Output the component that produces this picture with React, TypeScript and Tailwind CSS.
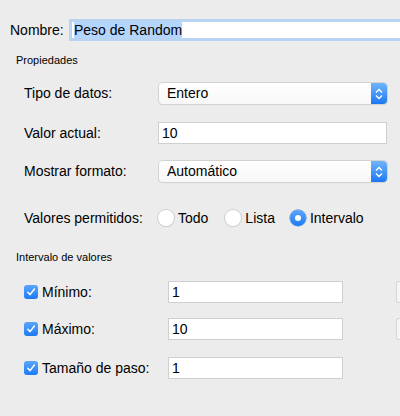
import React from "react";

const font = { fontFamily: '"Liberation Sans", Arial, sans-serif' };

function Select({ value }: { value: string }) {
  return (
    <div className="ml-[159px] w-[228px] h-[21px] flex rounded-[4px] bg-gradient-to-b from-white to-[#f7f7f7] shadow-[0_0_0_1px_#d2d2d2,0_1px_1px_rgba(0,0,0,0.15)]">
      <div className="flex-1 flex items-center pl-[8px] text-[14px] text-black">{value}</div>
      <div className="w-[16px] h-full rounded-r-[4px] bg-gradient-to-b from-[#6fb4fb] to-[#1877f2] flex items-center justify-center">
        <svg width="10" height="14" viewBox="0 0 10 14">
          <path d="M2 5.5 L5 2.5 L8 5.5" fill="none" stroke="white" strokeWidth="1.4" />
          <path d="M2 8.5 L5 11.5 L8 8.5" fill="none" stroke="white" strokeWidth="1.4" />
        </svg>
      </div>
    </div>
  );
}

function Radio({ checked }: { checked?: boolean }) {
  if (checked)
    return (
      <div className="w-[16px] h-[16px] rounded-full bg-gradient-to-b from-[#5aa6fb] to-[#1b79f3] flex items-center justify-center shadow-[0_0_0_0.5px_#2d6fd0]">
        <div className="w-[6px] h-[6px] rounded-full bg-white" />
      </div>
    );
  return (
    <div className="w-[16px] h-[16px] rounded-full bg-white shadow-[0_0_0_1px_#cfcfcf,0_1px_1px_rgba(0,0,0,0.12)]" />
  );
}

function Checkbox() {
  return (
    <div className="w-[14px] h-[14px] shrink-0 rounded-[3px] bg-gradient-to-b from-[#5aa6fb] to-[#1b79f3] flex items-center justify-center">
      <svg width="10" height="10" viewBox="0 0 10 10">
        <path d="M1.8 5.2 L4 7.6 L8.4 2" fill="none" stroke="white" strokeWidth="1.5" strokeLinecap="round" strokeLinejoin="round" />
      </svg>
    </div>
  );
}

function RangeRow({ label, value, mt, side }: { label: string; value: string; mt: string; side?: boolean }) {
  return (
    <div className={`flex items-center h-[22px] ${mt}`}>
      <div className="w-[168px] shrink-0 flex items-center pl-[24px] gap-[4px]">
        <Checkbox />
        <span className="text-[14px] text-black">{label}</span>
      </div>
      <div className="w-[175px] shrink-0 h-[22px] bg-white border border-[#cfcfcf] flex items-center pl-[3px] text-[14px] text-black">
        {value}
      </div>
      {side ? (
        <div className="ml-[53px] shrink-0 h-[22px] w-[10px] border-l border-t border-b border-[#d6d6d6] bg-[#f6f6f6] rounded-l-[3px]" />
      ) : null}
    </div>
  );
}

export default function App() {
  return (
    <div className="w-[400px] h-[416px] bg-[#ececec] overflow-hidden flex flex-col" style={font}>
      <div className="flex items-center h-[22px] mt-[19px]">
        <span className="ml-[10px] w-[59px] text-[14px] text-black">Nombre:</span>
        <div className="flex-1 h-[22px] bg-white border-[3px] border-[#b9d3f3] border-r-0 flex items-center">
          <span className="ml-[2px] bg-[#b4d5fe] text-[14px] text-black leading-[16px]">Peso de Random</span>
        </div>
      </div>
      <div className="ml-[16px] mt-[12px] text-[11px] text-black leading-[14px]">Propiedades</div>

      <div className="flex items-center mt-[16px] relative">
        <span className="absolute left-[24px] text-[14px] text-black">Tipo de datos:</span>
        <Select value="Entero" />
      </div>

      <div className="flex items-center mt-[18px] h-[22px]">
        <span className="ml-[24px] w-[134px] text-[14px] text-black">Valor actual:</span>
        <div className="w-[229px] h-[22px] bg-white border border-[#cfcfcf] flex items-center pl-[3px] text-[14px] text-black">10</div>
      </div>

      <div className="flex items-center mt-[17px] relative">
        <span className="absolute left-[24px] text-[14px] text-black">Mostrar formato:</span>
        <Select value="Automático" />
      </div>

      <div className="flex items-center mt-[27px] h-[18px] text-[14px] text-black">
        <span className="ml-[24px] w-[134px]">Valores permitidos:</span>
        <Radio />
        <span className="ml-[4px]">Todo</span>
        <span className="ml-[17px]"><Radio /></span>
        <span className="ml-[4px]">Lista</span>
        <span className="ml-[15px]"><Radio checked /></span>
        <span className="ml-[4px]">Intervalo</span>
      </div>

      <div className="ml-[16px] mt-[23px] text-[11px] text-black leading-[14px]">Intervalo de valores</div>

      <RangeRow label="Mínimo:" value="1" mt="mt-[17px]" side />
      <RangeRow label="Máximo:" value="10" mt="mt-[15px]" side />
      <RangeRow label="Tamaño de paso:" value="1" mt="mt-[17px]" />
    </div>
  );
}
